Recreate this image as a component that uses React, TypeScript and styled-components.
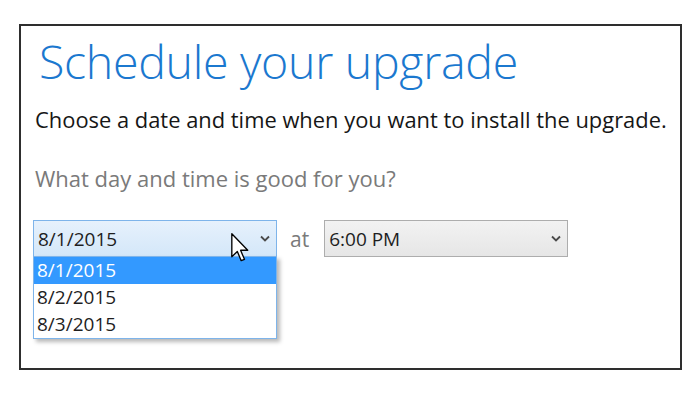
import React from 'react';
import styled, { createGlobalStyle } from 'styled-components';

const GlobalStyle = createGlobalStyle`
  html, body {
    margin: 0;
    padding: 0;
    background: #fff;
  }
  body {
    font-family: 'Open Sans', 'Noto Sans', sans-serif;
  }
`;

const Page = styled.div`
  width: 700px;
  height: 400px;
  padding: 24px 0 0 19px;
  box-sizing: border-box;
`;

const Frame = styled.div`
  width: 663px;
  height: 346px;
  box-sizing: border-box;
  border: 2px solid #2e2e2e;
  padding: 4px 0 0 14px;
`;

const Title = styled.h1`
  margin: 0 0 0 4px;
  font-size: 46.5px;
  font-weight: 300;
  line-height: 62px;
  color: #1b78cf;
  letter-spacing: -0.3px;
`;

const Lead = styled.p`
  margin: 14px 0 0;
  font-size: 21.9px;
  line-height: 28px;
  color: #161616;
`;

const Question = styled.p`
  margin: 30px 0 0;
  font-size: 22px;
  line-height: 28px;
  color: #7a7a7a;
`;

const Row = styled.div`
  display: flex;
  align-items: center;
  gap: 13px;
  margin-top: 28px;
  margin-left: -2px;
`;

const SelectWrap = styled.div`
  position: relative;
`;

const Select = styled.div<{ $open?: boolean }>`
  width: 244px;
  height: 37px;
  box-sizing: border-box;
  display: flex;
  align-items: center;
  justify-content: space-between;
  padding: 0 6px 0 4px;
  border: 1px solid ${p => (p.$open ? '#7eb4ea' : '#adadad')};
  background: ${p =>
    p.$open
      ? 'linear-gradient(#e6f1fc, #d4e7f9)'
      : 'linear-gradient(#f2f2f2, #e6e6e6)'};
  font-size: 19px;
  color: #1e1e1e;
`;

const Chevron = () => (
  <svg width="10" height="7" viewBox="0 0 10 7">
    <path d="M1 1.5 L5 5.5 L9 1.5" fill="none" stroke="#4a4a4a" strokeWidth="1.8" />
  </svg>
);

const At = styled.span`
  font-size: 21px;
  color: #7a7a7a;
  margin-right: 2px;
`;

const List = styled.ul`
  position: absolute;
  top: 36px;
  left: 0;
  width: 244px;
  box-sizing: border-box;
  margin: 0;
  padding: 0;
  list-style: none;
  border: 1px solid #7eb4ea;
  background: #fff;
  box-shadow: 3px 3px 4px rgba(0, 0, 0, 0.28);
  z-index: 2;
`;

const Item = styled.li<{ $active?: boolean }>`
  height: 27px;
  line-height: 27px;
  padding-left: 3px;
  font-size: 19px;
  color: ${p => (p.$active ? '#fff' : '#1e1e1e')};
  background: ${p => (p.$active ? '#3399ff' : 'transparent')};
`;

const Cursor = styled.svg`
  position: absolute;
  left: 198px;
  top: 13px;
  z-index: 3;
`;

const dates = ['8/1/2015', '8/2/2015', '8/3/2015'];

export default function App() {
  return (
    <>
      <GlobalStyle />
      <Page>
        <Frame>
          <Title>Schedule your upgrade</Title>
          <Lead>Choose a date and time when you want to install the upgrade.</Lead>
          <Question>What day and time is good for you?</Question>
          <Row>
            <SelectWrap>
              <Select $open>
                <span>8/1/2015</span>
                <Chevron />
              </Select>
              <List>
                {dates.map((d, i) => (
                  <Item key={d} $active={i === 0}>
                    {d}
                  </Item>
                ))}
              </List>
              <Cursor width="18" height="29" viewBox="0 0 12 19.5">
                <path
                  d="M0.5 0.5 L0.5 16 L4.2 12.4 L6.8 18.6 L9 17.7 L6.4 11.6 L11.2 11.6 Z"
                  fill="#fff"
                  stroke="#000"
                  strokeWidth="0.9"
                  strokeLinejoin="round"
                />
              </Cursor>
            </SelectWrap>
            <At>at</At>
            <Select>
              <span>6:00 PM</span>
              <Chevron />
            </Select>
          </Row>
        </Frame>
      </Page>
    </>
  );
}
